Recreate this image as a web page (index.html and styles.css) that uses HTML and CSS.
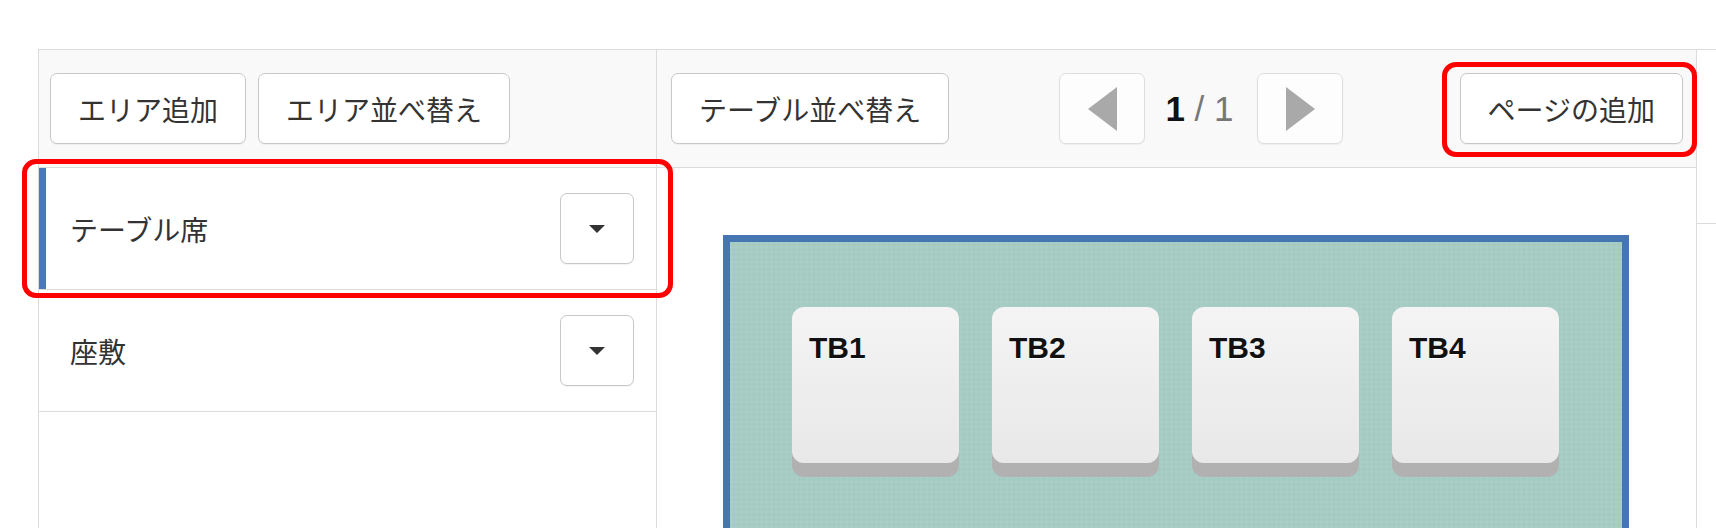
FILE: index.html
```html
<!DOCTYPE html>
<html lang="ja">
<head>
    <meta charset="UTF-8">
    <meta name="viewport" content="width=device-width, initial-scale=1.0">
    <title>フロア設定</title>
    <link rel="stylesheet" href="styles.css">
</head>
<body>
    <div class="layout">
        <section class="area-panel">
            <div class="toolbar">
                <button type="button" class="btn">エリア追加</button>
                <button type="button" class="btn">エリア並べ替え</button>
            </div>
            <ul class="area-list">
                <li class="area-item active">
                    <span>テーブル席</span>
                    <button type="button" class="btn btn-menu"><span class="caret"></span></button>
                    <span class="mark mark-area"></span>
                </li>
                <li class="area-item">
                    <span>座敷</span>
                    <button type="button" class="btn btn-menu"><span class="caret"></span></button>
                </li>
            </ul>
        </section>

        <section class="floor-panel">
            <div class="toolbar toolbar-floor">
                <button type="button" class="btn">テーブル並べ替え</button>
                <div class="pager">
                    <button type="button" class="btn btn-page">
                        <svg width="29" height="44" viewBox="0 0 29 44"><polygon points="29,0 0,22 29,44" fill="#a9a9a9"/></svg>
                    </button>
                    <span class="page-num"><b>1</b> / 1</span>
                    <button type="button" class="btn btn-page">
                        <svg width="29" height="44" viewBox="0 0 29 44"><polygon points="0,0 29,22 0,44" fill="#a9a9a9"/></svg>
                    </button>
                </div>
                <div class="page-add">
                    <button type="button" class="btn">ページの追加</button>
                    <span class="mark mark-page"></span>
                </div>
            </div>
            <div class="floor">
                <div class="floor-map">
                    <div class="seat">TB1</div>
                    <div class="seat">TB2</div>
                    <div class="seat">TB3</div>
                    <div class="seat">TB4</div>
                </div>
            </div>
        </section>

        <section class="side-panel">
            <div class="side-head"></div>
        </section>
    </div>
</body>
</html>
```

FILE: styles.css
```css
html, body {
    margin: 0;
    height: 100%;
    overflow: hidden;
    background: #fff;
}
body {
    font-family: "Noto Sans CJK JP", sans-serif;
    color: #333;
}
.layout {
    display: flex;
    margin: 49px 0 0 38px;
    height: calc(100% - 49px);
    border-top: 1px solid #dcdcdc;
    border-left: 1px solid #dcdcdc;
    box-sizing: border-box;
}
.area-panel {
    width: 618px;
    flex-shrink: 0;
    border-right: 1px solid #dcdcdc;
    box-sizing: border-box;
}
.floor-panel {
    display: flex;
    flex-direction: column;
    width: 1040px;
    flex-shrink: 0;
    border-right: 1px solid #dcdcdc;
    box-sizing: border-box;
}
.side-panel {
    flex: 1;
}
.side-head {
    height: 173px;
    border-bottom: 1px solid #dcdcdc;
}
.toolbar {
    display: flex;
    align-items: center;
    gap: 12px;
    height: 118px;
    flex-shrink: 0;
    padding: 0 11px;
    background: #f9f9f9;
    border-bottom: 1px solid #dcdcdc;
    box-sizing: border-box;
}
.toolbar-floor {
    justify-content: space-between;
    padding: 0 13px 0 14px;
}
.btn {
    height: 71px;
    padding: 0 27px;
    font-family: inherit;
    font-size: 28px;
    color: #333;
    background: #fff;
    border: 1px solid #c8c8c8;
    border-radius: 7px;
    box-shadow: 0 1px 1px rgba(0, 0, 0, 0.05);
    cursor: pointer;
}
.pager {
    display: flex;
    align-items: center;
    margin-right: 6px;
}
.btn-page {
    display: flex;
    align-items: center;
    justify-content: center;
    width: 86px;
    padding: 0;
    background: #fdfdfd;
    border-color: #dedede;
}
.page-num {
    padding: 0 24px 0 20px;
    font-family: "Liberation Sans", sans-serif;
    font-size: 35px;
    color: #777;
}
.page-num b {
    color: #111;
}
.page-add {
    position: relative;
}
.area-list {
    list-style: none;
    margin: 0;
    padding: 0;
}
.area-item {
    position: relative;
    display: flex;
    align-items: center;
    justify-content: space-between;
    height: 122px;
    padding: 0 22px 0 31px;
    font-size: 28px;
    border-bottom: 1px solid #dcdcdc;
    box-sizing: border-box;
}
.area-item.active {
    box-shadow: inset 7px 0 0 #4a7ab5;
}
.btn-menu {
    display: flex;
    align-items: center;
    justify-content: center;
    width: 74px;
    padding: 0;
}
.caret {
    width: 0;
    height: 0;
    border-left: 8px solid transparent;
    border-right: 8px solid transparent;
    border-top: 8px solid #333;
}
.mark {
    position: absolute;
    border: 5px solid #f00;
    border-radius: 14px;
    pointer-events: none;
}
.mark-area {
    top: -9px;
    bottom: -9px;
    left: -17px;
    right: -17px;
}
.mark-page {
    top: -11px;
    bottom: -13px;
    left: -18px;
    right: -14px;
}
.floor {
    flex: 1;
    min-height: 0;
    overflow: hidden;
    padding: 67px 0 0 66px;
}
.floor-map {
    display: flex;
    gap: 33px;
    width: 906px;
    height: 420px;
    padding: 65px 0 0 62px;
    background-color: #a7cdc4;
    background-image:
        repeating-linear-gradient(90deg, rgba(255, 255, 255, 0.015) 0 3px, rgba(0, 0, 0, 0.01) 3px 5px),
        repeating-linear-gradient(0deg, rgba(255, 255, 255, 0.015) 0 2px, rgba(0, 0, 0, 0.01) 2px 5px);
    border: 7px solid #4676b1;
    box-sizing: border-box;
}
.seat {
    width: 167px;
    height: 156px;
    padding: 24px 0 0 17px;
    font-family: "Liberation Sans", sans-serif;
    font-size: 30px;
    font-weight: bold;
    color: #111;
    text-shadow: 0 1px 0 #fff;
    background: linear-gradient(#f4f4f4, #e8e8e8);
    border-radius: 12px;
    box-shadow: 0 14px 0 #b1b1b1;
    box-sizing: border-box;
}
```
